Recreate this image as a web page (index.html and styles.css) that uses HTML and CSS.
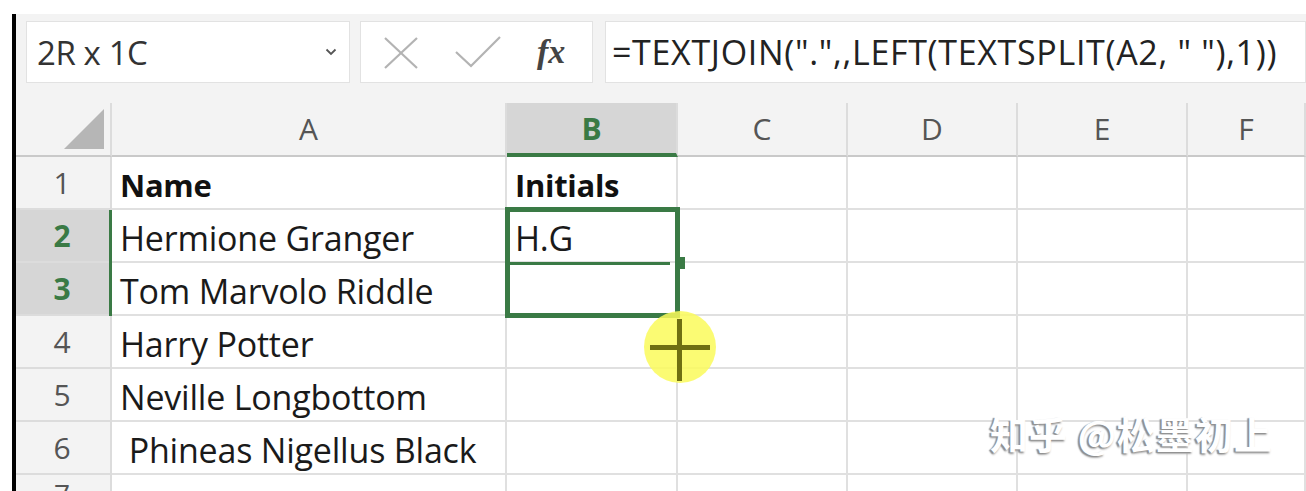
FILE: index.html
```html
<!DOCTYPE html>
<html lang="en">
<head>
<meta charset="utf-8">
<title>Excel TEXTJOIN</title>
<link rel="stylesheet" href="styles.css">
</head>
<body>
<div class="frame">
  <div class="toolbar">
    <div class="namebox">
      <span class="name-text">2R x 1C</span>
      <svg class="chev" width="12" height="8" viewBox="0 0 12 8"><path d="M1.5 1.5 L6 6 L10.5 1.5" fill="none" stroke="#555" stroke-width="1.8"/></svg>
    </div>
    <div class="fxbox">
      <svg class="ico-x" width="36" height="32" viewBox="0 0 36 32"><path d="M2 1 L34 31 M34 1 L2 31" stroke="#b3b3b3" stroke-width="2.2" fill="none"/></svg>
      <svg class="ico-check" width="46" height="32" viewBox="0 0 46 32"><path d="M1 16 L16 30 L45 1" stroke="#b3b3b3" stroke-width="2.2" fill="none"/></svg>
      <span class="fx">fx</span>
    </div>
    <div class="formula"><span class="ftext">=TEXTJOIN(".",,LEFT(TEXTSPLIT(A2, " "),1))</span></div>
  </div>
  <div class="sheet">
    <div class="grid">
      <div class="corner"><div class="tri"></div></div>
      <div class="ch">A</div>
      <div class="ch ch-sel">B</div>
      <div class="ch">C</div>
      <div class="ch">D</div>
      <div class="ch">E</div>
      <div class="ch">F</div>

      <div class="rh">1</div>
      <div class="c bold">Name</div>
      <div class="c bold">Initials</div>
      <div class="c"></div><div class="c"></div><div class="c"></div><div class="c"></div>

      <div class="rh rh-sel">2</div>
      <div class="c">Hermione Granger</div>
      <div class="c">H.G</div>
      <div class="c"></div><div class="c"></div><div class="c"></div><div class="c"></div>

      <div class="rh rh-sel">3</div>
      <div class="c">Tom Marvolo Riddle</div>
      <div class="c"></div>
      <div class="c"></div><div class="c"></div><div class="c"></div><div class="c"></div>

      <div class="rh">4</div>
      <div class="c">Harry Potter</div>
      <div class="c"></div>
      <div class="c"></div><div class="c"></div><div class="c"></div><div class="c"></div>

      <div class="rh">5</div>
      <div class="c">Neville Longbottom</div>
      <div class="c"></div>
      <div class="c"></div><div class="c"></div><div class="c"></div><div class="c"></div>

      <div class="rh">6</div>
      <div class="c">&nbsp;Phineas Nigellus Black</div>
      <div class="c"></div>
      <div class="c"></div><div class="c"></div><div class="c"></div><div class="c"></div>

      <div class="rh rh-last">7</div>
      <div class="c"></div>
      <div class="c"></div>
      <div class="c"></div><div class="c"></div><div class="c"></div><div class="c"></div>
    </div>
    <div class="rowmark"></div>
    <div class="selection"></div>
    <div class="midline"></div>
    <div class="handle"></div>
    <div class="cursor"><div class="hbar"></div><div class="vbar"></div></div>
    <div class="watermark">知乎 @松墨初上</div>
  </div>
</div>
</body>
</html>
```

FILE: styles.css
```css
html, body {
  margin: 0;
  padding: 0;
  background: #ffffff;
  width: 1306px;
  height: 491px;
  overflow: hidden;
}

.frame {
  margin-top: 14px;
  margin-left: 12px;
  border-left: 4px solid #000;
  height: 477px;
  overflow: hidden;
  font-family: "Open Sans", "Noto Sans", sans-serif;
}

/* ---------- toolbar ---------- */
.toolbar {
  height: 89px;
  box-sizing: border-box;
  background: #f3f3f3;
  display: flex;
  align-items: flex-start;
  padding: 7px 0 0 10px;
  gap: 10px;
}

.namebox {
  width: 324px;
  height: 62px;
  box-sizing: border-box;
  background: #fff;
  border: 1px solid #e2e2e2;
  display: flex;
  align-items: center;
  justify-content: space-between;
  padding: 0 12px 0 10px;
}

.name-text {
  font-size: 33px;
  color: #333;
  letter-spacing: -0.4px;
}

.fxbox {
  width: 233px;
  height: 62px;
  box-sizing: border-box;
  background: #fff;
  border: 1px solid #e2e2e2;
  display: flex;
  align-items: center;
  padding: 0 0 0 22px;
}

.ico-x { margin-top: 2px; }
.ico-check { margin-left: 36px; }

.fx {
  font-family: "Liberation Serif", "DejaVu Serif", serif;
  font-style: italic;
  font-weight: bold;
  font-size: 34px;
  color: #444;
  margin-left: 36px;
}

.formula {
  flex: 1;
  height: 62px;
  box-sizing: border-box;
  background: #fff;
  border: 1px solid #e2e2e2;
  margin-left: 2px;
  display: flex;
  align-items: center;
  padding-left: 6px;
  overflow: hidden;
  white-space: nowrap;
}

.ftext {
  font-size: 34px;
  color: #222;
  letter-spacing: 0.68px;
}

/* ---------- sheet ---------- */
.sheet {
  position: relative;
}

.grid {
  display: grid;
  grid-template-columns: 96px 395px 171px 170px 170px 170px 1fr;
  grid-template-rows: 54px repeat(7, 53px);
}

.corner {
  background: #f3f3f3;
  border-right: 2px solid #dcdcdc;
  border-bottom: 2px solid #c9c9c9;
  box-sizing: border-box;
  display: flex;
  align-items: flex-end;
  justify-content: flex-end;
  padding: 0 6px 6px 0;
}

.tri {
  width: 0;
  height: 0;
  border-left: 40px solid transparent;
  border-bottom: 40px solid #b6b6b6;
}

.ch {
  background: #f3f3f3;
  border-right: 2px solid #dcdcdc;
  border-bottom: 2px solid #c9c9c9;
  box-sizing: border-box;
  display: flex;
  align-items: center;
  justify-content: center;
  font-size: 30px;
  color: #555;
  padding-bottom: 2px;
}

.ch-sel {
  background: #d6d6d6;
  color: #3a7a45;
  font-weight: bold;
  border-bottom: 4px solid #3a7a45;
  padding-bottom: 0;
}

.rh {
  background: #f3f3f3;
  border-right: 2px solid #dcdcdc;
  border-bottom: 2px solid #dcdcdc;
  box-sizing: border-box;
  display: flex;
  align-items: center;
  justify-content: center;
  font-size: 30px;
  color: #555;
  padding-right: 2px;
}

.rh-last {
  align-items: flex-start;
  padding-top: 4px;
  font-size: 28px;
  line-height: 30px;
}

.rh-sel {
  background: #d6d6d6;
  color: #3a7a45;
  font-weight: bold;
}

.c {
  background: #fff;
  border-right: 2px solid #e0e0e0;
  border-bottom: 2px solid #e0e0e0;
  box-sizing: border-box;
  display: flex;
  align-items: center;
  padding: 4px 0 0 8px;
  font-size: 34px;
  color: #1a1a1a;
  white-space: nowrap;
  letter-spacing: -0.2px;
}

.bold {
  font-weight: bold;
  color: #111;
  font-size: 31px;
  letter-spacing: -0.3px;
}

/* overlays */
.rowmark {
  position: absolute;
  left: 93px;
  top: 107px;
  width: 3px;
  height: 106px;
  background: #3a7a45;
}

.selection {
  position: absolute;
  left: 489px;
  top: 104px;
  width: 175px;
  height: 111px;
  box-sizing: border-box;
  border: 5px solid #3a7a45;
}

.midline {
  position: absolute;
  left: 494px;
  top: 159px;
  width: 160px;
  height: 3px;
  background: #3a7a45;
}

.handle {
  position: absolute;
  left: 661px;
  top: 154px;
  width: 8px;
  height: 12px;
  background: #3a7a45;
}

.cursor {
  position: absolute;
  left: 628px;
  top: 208px;
  width: 72px;
  height: 72px;
  border-radius: 50%;
  background: rgba(250, 250, 90, 0.85);
}

.hbar {
  position: absolute;
  left: 6px;
  top: 34px;
  width: 60px;
  height: 5px;
  background: #6f6f12;
}

.vbar {
  position: absolute;
  left: 33px;
  top: 8px;
  width: 5px;
  height: 62px;
  background: #6f6f12;
}

.watermark {
  position: absolute;
  left: 974px;
  top: 302px;
  font-family: "Noto Sans CJK SC", "Noto Sans", sans-serif;
  font-size: 38px;
  font-weight: bold;
  color: #ffffff;
  letter-spacing: 1px;
  text-shadow: -2px 1px 1px #8f8f8f, -1px 2px 2px #b0b0b0;
  white-space: nowrap;
}
```
